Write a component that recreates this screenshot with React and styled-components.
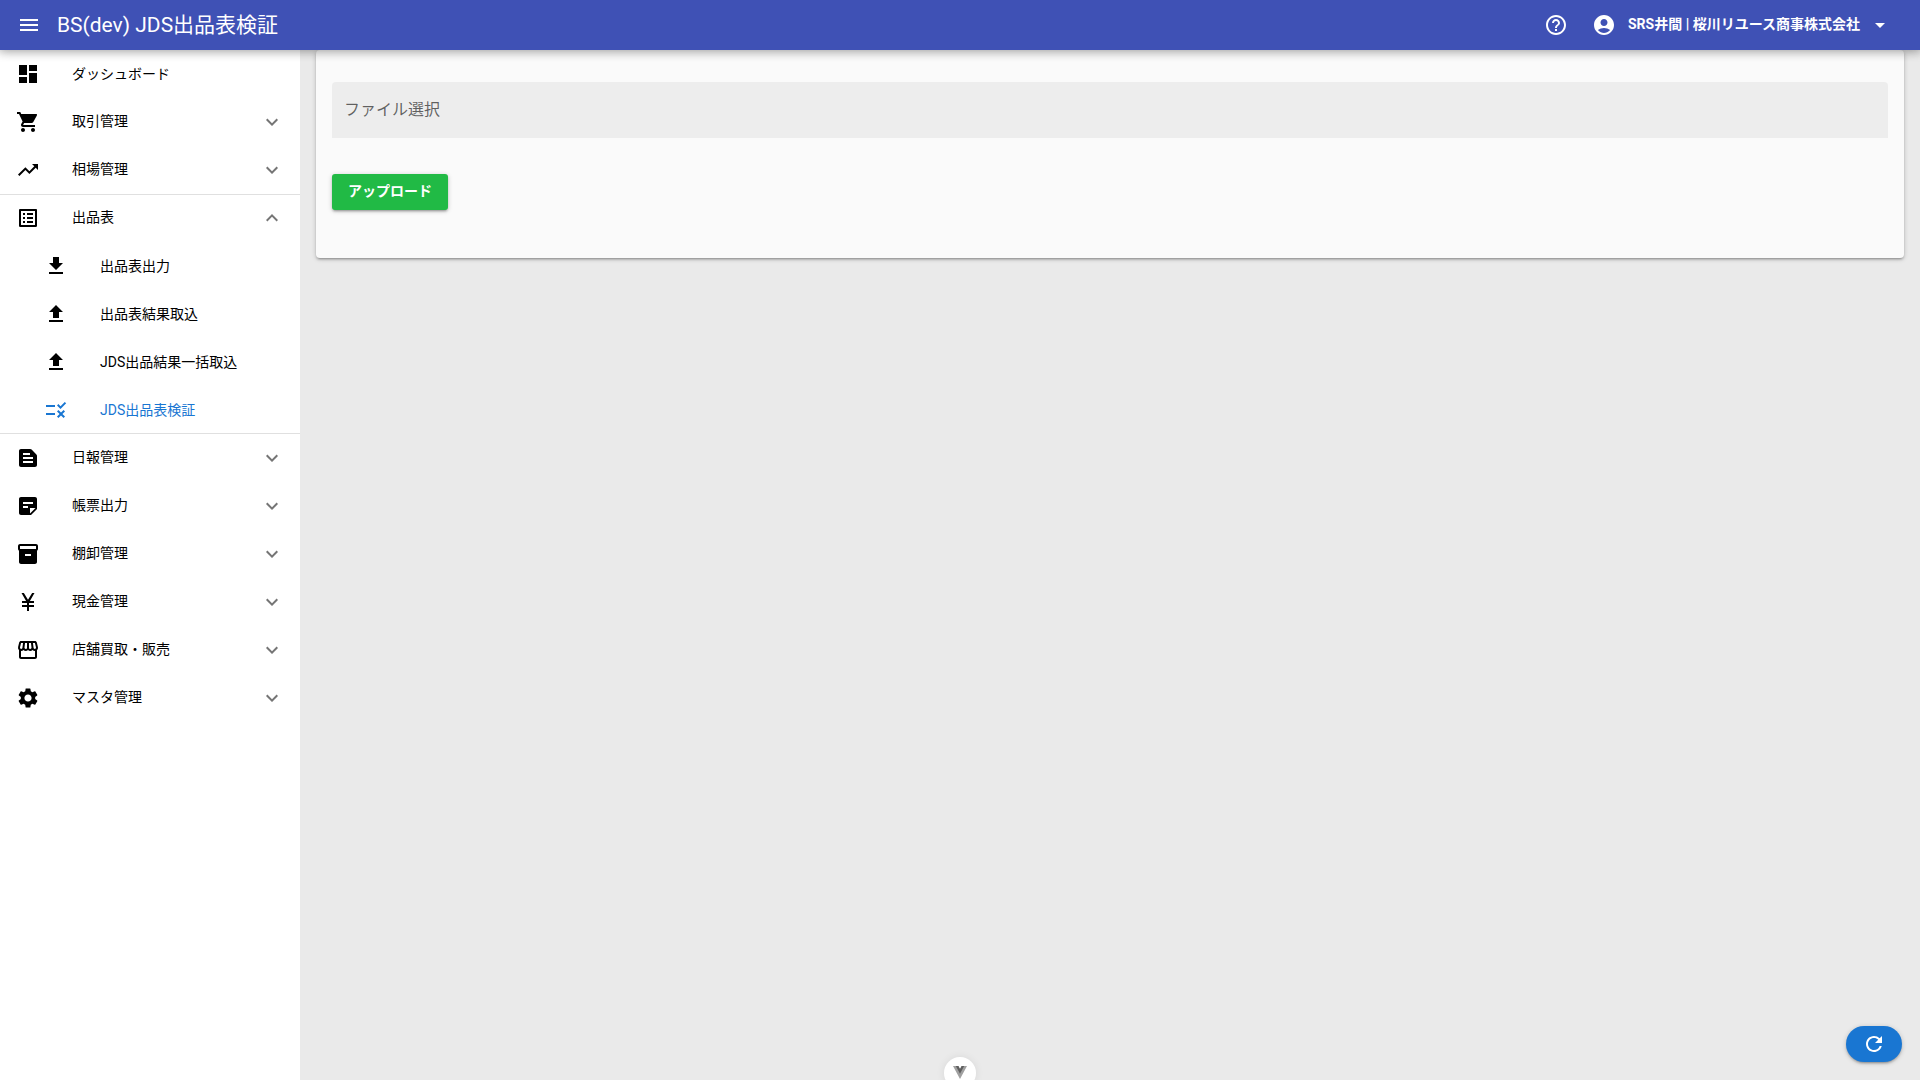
import React, { useState } from "react";
import styled, { createGlobalStyle, css } from "styled-components";
import {
  MdMenu,
  MdHelpOutline,
  MdAccountCircle,
  MdArrowDropDown,
  MdDashboard,
  MdShoppingCart,
  MdTrendingUp,
  MdListAlt,
  MdFileDownload,
  MdFileUpload,
  MdRule,
  MdTextSnippet,
  MdStickyNote2,
  MdInventory2,
  MdSettings,
  MdKeyboardArrowDown,
  MdKeyboardArrowUp,
  MdRefresh,
} from "react-icons/md";

const GlobalStyle = createGlobalStyle`
  *, *::before, *::after { box-sizing: border-box; }
  body {
    margin: 0;
    background: #eaeaea;
    color: #000;
    font-family: Roboto, "Noto Sans CJK JP", sans-serif;
    font-size: 14px;
    line-height: 20px;
  }
  button { font-family: inherit; font-size: inherit; line-height: inherit; border: 0; cursor: pointer; }
`;

const elevation = css`
  box-shadow: 0 1px 5px rgba(0, 0, 0, 0.2), 0 2px 2px rgba(0, 0, 0, 0.14),
    0 3px 1px -2px rgba(0, 0, 0, 0.12);
`;

const Page = styled.div`
  display: flex;
  flex-direction: column;
  min-height: 100vh;
`;

const Header = styled.header`
  position: sticky;
  top: 0;
  z-index: 2;
  display: flex;
  align-items: center;
  height: 50px;
  padding: 0 12px 0 13px;
  background: #3f51b5;
  color: #fff;
  box-shadow: 0 0 10px 2px rgba(0, 0, 0, 0.2), 0 0 10px rgba(0, 0, 0, 0.24);
`;

const IconButton = styled.button`
  display: flex;
  padding: 4px;
  background: none;
  color: inherit;
`;

const Title = styled.h1`
  flex: 1;
  margin: 0;
  padding: 0 12px;
  font-size: 21px;
  font-weight: 400;
  line-height: 32px;
`;

const AccountButton = styled.button`
  display: flex;
  align-items: center;
  gap: 12px;
  margin-left: 4px;
  padding: 8px 16px;
  background: none;
  color: inherit;
  font-weight: 700;
`;

const AccountMenu = styled.span`
  display: flex;
  align-items: center;
  gap: 8px;
`;

const AccountName = styled.span`
  padding-bottom: 2px;
`;

const Body = styled.div`
  display: flex;
  flex: 1;
`;

const Sidebar = styled.nav`
  flex: 0 0 300px;
  background: #fff;
`;

const Group = styled.div`
  position: relative;
  ${(p) =>
    p.$open &&
    css`
      &::before,
      &::after {
        content: "";
        position: absolute;
        left: 0;
        right: 0;
        height: 1px;
        background: rgba(0, 0, 0, 0.12);
      }
      &::before { top: 0; }
      &::after { bottom: 0; }
    `}
`;

const itemStyle = css`
  display: flex;
  align-items: center;
  width: 100%;
  height: 48px;
  padding: 0 16px;
  background: none;
  color: #000;
  text-align: left;
  text-decoration: none;
`;

const NavLink = styled.a`
  ${itemStyle}
  padding-left: ${(p) => (p.$sub ? 44 : 16)}px;
  color: ${(p) => (p.$active ? "#1976d2" : "#000")};
`;

const NavToggle = styled.button`
  ${itemStyle}
`;

const ItemIcon = styled.span`
  display: flex;
  flex: 0 0 56px;
`;

const ItemLabel = styled.span`
  flex: 1;
  padding-bottom: ${(p) => (p.$raised ? 2 : 0)}px;
`;

const Chevron = styled.span`
  display: flex;
  color: #757575;
`;

const Main = styled.main`
  flex: 1;
  min-width: 0;
  padding: 0 16px;
`;

const Card = styled.form`
  display: flex;
  flex-direction: column;
  align-items: flex-start;
  gap: 36px;
  padding: 32px 16px 48px;
  border-radius: 4px;
  background: #fafafa;
  ${elevation}
`;

const FileField = styled.label`
  display: flex;
  align-items: center;
  width: 100%;
  height: 56px;
  padding: 0 12px;
  border-radius: 4px 4px 0 0;
  background: #ededed;
  color: rgba(0, 0, 0, 0.6);
  font-size: 16px;
  cursor: pointer;
`;

const FileInput = styled.input`
  position: absolute;
  width: 1px;
  height: 1px;
  opacity: 0;
`;

const UploadButton = styled.button`
  padding: 7px 16px 9px;
  border-radius: 3px;
  background: #21ba45;
  color: #fff;
  font-weight: 700;
  ${elevation}
`;

const RefreshButton = styled.button`
  position: fixed;
  right: 18px;
  bottom: 18px;
  display: flex;
  padding: 6px 16px;
  border-radius: 28px;
  background: #1976d2;
  color: #fff;
  ${elevation}
`;

const DevtoolsButton = styled.button`
  position: fixed;
  left: 50%;
  bottom: -9px;
  display: flex;
  align-items: center;
  justify-content: center;
  width: 32px;
  height: 32px;
  margin-left: -16px;
  padding: 0 0 2px;
  border-radius: 50%;
  background: #fff;
  box-shadow: 0 0 8px rgba(0, 0, 0, 0.08);
`;

const YenIcon = () => (
  <svg width="24" height="24" viewBox="0 0 24 24" fill="currentColor" aria-hidden="true">
    <path d="M13.920 11H18v2h-5v2h5v2h-5v4h-2v-4H6v-2h5v-2H6v-2h4.080L5.500 3h2.370L12 9.750 16.130 3h2.370z" />
  </svg>
);

const StoreIcon = () => (
  <svg width="24" height="24" viewBox="0 0 24 24" fill="currentColor" aria-hidden="true">
    <path d="M21.900 8.890l-1.050-4.370c-.22-.9-1-1.520-1.910-1.520H5.050c-.9 0-1.690.63-1.900 1.520L2.100 8.890c-.24 1.020-.02 2.060.62 2.880.08.110.19.190.28.290V19c0 1.100.9 2 2 2h14c1.100 0 2-.9 2-2v-6.940c.09-.09.2-.18.28-.28.64-.82.87-1.870.62-2.890zm-2.990-3.900l1.050 4.370c.1.420.010.840-.250 1.170-.14.180-.44.470-.94.470-.61 0-1.140-.49-1.210-1.140L16.980 5l1.930-.01zM13 5h1.960l.54 4.520c.05.390-.07.780-.33 1.070-.22.260-.54.410-.95.410-.67 0-1.220-.59-1.220-1.310V5zM8.490 9.520L9.040 5H11v4.690c0 .72-.55 1.310-1.290 1.310-.34 0-.65-.15-.89-.41-.25-.29-.37-.68-.33-1.070zm-4.450-.16L5.050 5h1.970l-.58 4.860c-.08.65-.6 1.140-1.210 1.140-.49 0-.8-.29-.93-.47-.27-.32-.36-.75-.26-1.170zM5 19v-6.030c.08.010.15.030.23.030.87 0 1.660-.36 2.240-.95.6.6 1.400.95 2.310.95.87 0 1.650-.36 2.230-.93.590.57 1.390.93 2.290.93.840 0 1.640-.35 2.240-.95.580.59 1.370.95 2.240.95.080 0 .15-.02.23-.03V19H5z" />
  </svg>
);

const VueIcon = () => (
  <svg width="14" height="13" viewBox="0 0 196 170" preserveAspectRatio="none" aria-hidden="true">
    <path fill="#a0a0a0" d="M121 0L98 39.200 75.400 0H0l98 170L196 0z" />
    <path fill="#5f5f5f" d="M121 0L98 39.200 75.400 0H39.200L98 102 157 0z" />
  </svg>
);

const MENU = [
  { label: "ダッシュボード", icon: MdDashboard },
  { label: "取引管理", icon: MdShoppingCart, children: [] },
  { label: "相場管理", icon: MdTrendingUp, children: [] },
  {
    label: "出品表",
    icon: MdListAlt,
    children: [
      { label: "出品表出力", icon: MdFileDownload },
      { label: "出品表結果取込", icon: MdFileUpload },
      { label: "JDS出品結果一括取込", icon: MdFileUpload },
      { label: "JDS出品表検証", icon: MdRule, active: true },
    ],
  },
  { label: "日報管理", icon: MdTextSnippet, children: [] },
  { label: "帳票出力", icon: MdStickyNote2, children: [] },
  { label: "棚卸管理", icon: MdInventory2, children: [] },
  { label: "現金管理", icon: YenIcon, children: [] },
  { label: "店舗買取・販売", icon: StoreIcon, children: [] },
  { label: "マスタ管理", icon: MdSettings, children: [] },
];

function MenuLink({ item, sub }) {
  const Icon = item.icon;
  return (
    <NavLink href="#" $sub={sub} $active={item.active} aria-current={item.active ? "page" : undefined}>
      <ItemIcon>
        <Icon size={24} />
      </ItemIcon>
      <ItemLabel>{item.label}</ItemLabel>
    </NavLink>
  );
}

function MenuGroup({ item }) {
  const [open, setOpen] = useState(item.children.length > 0);
  const Icon = item.icon;
  return (
    <Group $open={open}>
      <NavToggle type="button" aria-expanded={open} onClick={() => setOpen(!open)}>
        <ItemIcon>
          <Icon size={24} />
        </ItemIcon>
        <ItemLabel $raised>{item.label}</ItemLabel>
        <Chevron>{open ? <MdKeyboardArrowUp size={24} /> : <MdKeyboardArrowDown size={24} />}</Chevron>
      </NavToggle>
      {open && item.children.map((child) => <MenuLink key={child.label} item={child} sub />)}
    </Group>
  );
}

export default function App() {
  return (
    <Page>
      <GlobalStyle />
      <Header>
        <IconButton type="button" aria-label="メニュー">
          <MdMenu size={24} />
        </IconButton>
        <Title>BS(dev) JDS出品表検証</Title>
        <IconButton type="button" aria-label="ヘルプ">
          <MdHelpOutline size={24} />
        </IconButton>
        <AccountButton type="button">
          <MdAccountCircle size={24} />
          <AccountMenu>
            <AccountName>SRS井間 | 桜川リユース商事株式会社</AccountName>
            <MdArrowDropDown size={24} />
          </AccountMenu>
        </AccountButton>
      </Header>
      <Body>
        <Sidebar>
          {MENU.map((item) =>
            item.children ? (
              <MenuGroup key={item.label} item={item} />
            ) : (
              <MenuLink key={item.label} item={item} />
            )
          )}
        </Sidebar>
        <Main>
          <Card onSubmit={(e) => e.preventDefault()}>
            <FileField htmlFor="upload-file">
              ファイル選択
              <FileInput id="upload-file" type="file" />
            </FileField>
            <UploadButton type="submit">アップロード</UploadButton>
          </Card>
        </Main>
      </Body>
      <RefreshButton type="button" aria-label="再読み込み">
        <MdRefresh size={24} />
      </RefreshButton>
      <DevtoolsButton type="button" aria-label="Vue DevTools">
        <VueIcon />
      </DevtoolsButton>
    </Page>
  );
}
